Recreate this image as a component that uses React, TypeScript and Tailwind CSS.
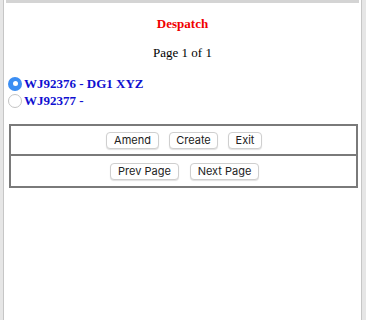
import React, { useState } from "react";

const serif = { fontFamily: '"Liberation Serif", "Times New Roman", serif' };

function Btn({ label, width }: { label: string; width: string }) {
    return (
        <button
            className={`${width} h-[17px] rounded-[4px] border border-[#cfcfcf] bg-white text-[11px] leading-none text-[#222] shadow-[0_1px_1px_rgba(0,0,0,0.12)]`}
            style={{ fontFamily: 'Inter, "Liberation Sans", Arial, sans-serif' }}
        >
            {label}
        </button>
    );
}

function Radio({ checked }: { checked: boolean }) {
    return checked ? (
        <span className="flex h-[14px] w-[14px] items-center justify-center rounded-full bg-[#3b8ef3]">
            <span className="h-[5px] w-[5px] rounded-full bg-white" />
        </span>
    ) : (
        <span className="h-[14px] w-[14px] rounded-full border border-[#c4c4c4] bg-white" />
    );
}

export default function App() {
    const [selected, setSelected] = useState(0);
    const items = ["WJ92376 - DG1 XYZ", "WJ92377 -"];

    return (
        <div className="flex h-[320px] w-full bg-[#e6e6e6]">
            <div className="ml-[3px] mr-[4px] flex flex-1 flex-col border-x border-[#c6c6c6] bg-white">
                <div className="mx-[2px] h-[3px] bg-[#d4d4d4]" />

                <div className="mt-[11px] text-center text-[13px] font-bold text-[#f00000]" style={serif}>
                    Despatch
                </div>
                <div className="mt-[9px] text-center text-[13px] text-black" style={serif}>
                    Page 1 of 1
                </div>

                {/* Despatch list */}
                <div className="mt-[13px] ml-[4px] flex flex-col">
                    {items.map((item, idx) => (
                        <label key={idx} className="flex h-[17px] items-center gap-[2px]" onClick={() => setSelected(idx)}>
                            <Radio checked={selected === idx} />
                            <span className="text-[13px] font-bold text-[#1010d0]" style={serif}>
                                {item}
                            </span>
                        </label>
                    ))}
                </div>

                {/* Actions */}
                <div className="mt-[15px] ml-[5px] mr-[3px] border-2 border-[#7a7a7a]">
                    <div className="flex h-[30px] items-center justify-center gap-[10px] border-b-2 border-[#7a7a7a] pl-[1px]">
                        <Btn label="Amend" width="w-[53px]" />
                        <Btn label="Create" width="w-[49px]" />
                        <Btn label="Exit" width="w-[34px]" />
                    </div>
                    <div className="flex h-[30px] items-center justify-center gap-[11px] pl-[2px]">
                        <Btn label="Prev Page" width="w-[69px]" />
                        <Btn label="Next Page" width="w-[69px]" />
                    </div>
                </div>
            </div>
        </div>
    );
}
